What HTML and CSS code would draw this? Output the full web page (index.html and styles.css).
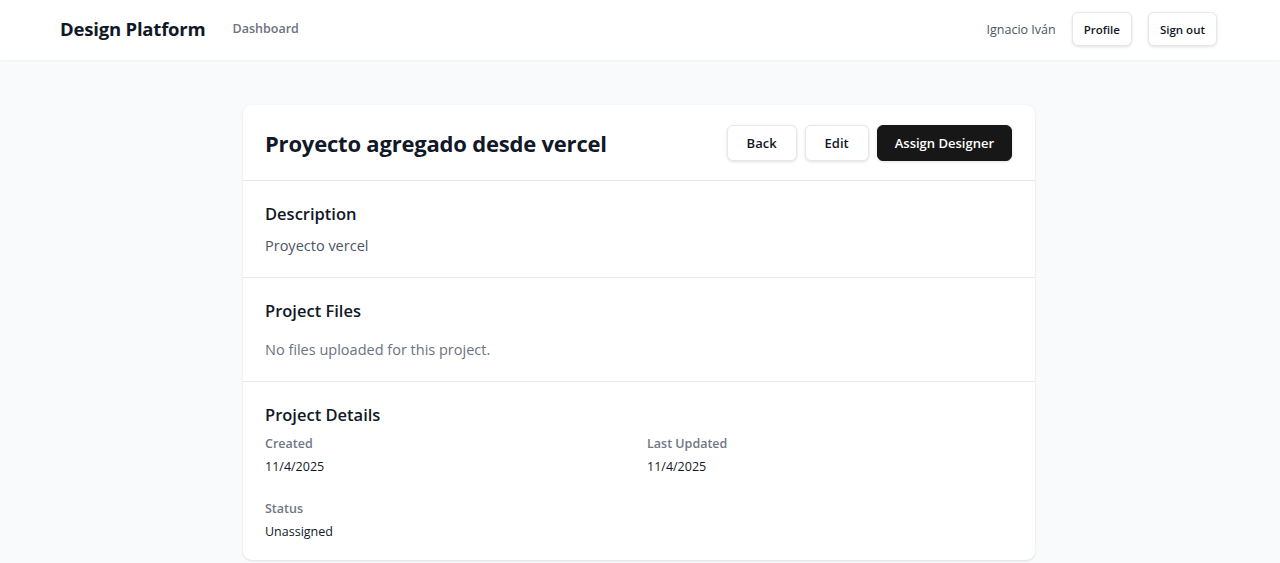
FILE: index.html
```html
<!DOCTYPE html>
<html lang="es">
<head>
<meta charset="utf-8">
<title>Design Platform</title>
<link rel="stylesheet" href="styles.css">
</head>
<body>
<header class="nav">
  <div class="nav-left">
    <span class="brand">Design Platform</span>
    <a class="nav-link" href="#">Dashboard</a>
  </div>
  <div class="nav-right">
    <span class="user">Ignacio Iván</span>
    <button class="btn btn-sm">Profile</button>
    <button class="btn btn-sm">Sign out</button>
  </div>
</header>
<main class="main">
  <section class="card">
    <div class="card-header">
      <h1 class="title">Proyecto agregado desde vercel</h1>
      <div class="actions">
        <button class="btn btn-md">Back</button>
        <button class="btn btn-md">Edit</button>
        <button class="btn btn-md btn-dark">Assign Designer</button>
      </div>
    </div>
    <div class="section">
      <h2 class="section-title">Description</h2>
      <p class="desc">Proyecto vercel</p>
    </div>
    <div class="section">
      <h2 class="section-title">Project Files</h2>
      <p class="desc files">No files uploaded for this project.</p>
    </div>
    <div class="section details">
      <h2 class="section-title">Project Details</h2>
      <dl class="grid">
        <div class="item"><dt>Created</dt><dd>11/4/2025</dd></div>
        <div class="item"><dt>Last Updated</dt><dd>11/4/2025</dd></div>
        <div class="item"><dt>Status</dt><dd>Unassigned</dd></div>
      </dl>
    </div>
  </section>
</main>
</body>
</html>
```
FILE: styles.css
```css
* { box-sizing: border-box; }
html, body { margin: 0; padding: 0; }
body {
  font-family: "Segoe UI", "Open Sans", "Noto Sans", sans-serif;
  background: #f9fafb;
  color: #111827;
  min-height: 563px;
}
.nav {
  height: 60px;
  background: #fff;
  display: flex;
  align-items: center;
  justify-content: space-between;
  padding: 0 63px 2px 60px;
  box-shadow: 0 1px 2px rgba(0,0,0,0.04);
}
.nav-left { display: flex; align-items: center; gap: 27px; padding-bottom: 2px; }
.brand { font-size: 18.5px; font-weight: 700; color: #111827; letter-spacing: -0.2px; }
.nav-link { font-size: 12.5px; font-weight: 600; color: #6b7280; text-decoration: none; }
.nav-right { display: flex; align-items: center; gap: 16px; }
.user { font-size: 12.5px; color: #4b5563; }
.btn {
  font-family: inherit;
  background: #fff;
  border: 1px solid #e5e7eb;
  border-radius: 6px;
  box-shadow: 0 1px 3px rgba(0,0,0,0.12);
  color: #111827;
  font-weight: 600;
  cursor: pointer;
}
.btn-sm { height: 34px; padding: 0 11px; font-size: 11.5px; }
.btn-md { height: 36px; padding: 0 19px; font-size: 13px; }
.btn-dark { background: #171717; color: #fff; border-color: #171717; padding: 0 17px; }
.main { padding: 45px 2px 0 0; display: flex; justify-content: center; }
.card {
  width: 792px;
  background: #fff;
  border-radius: 9px;
  box-shadow: 0 1px 3px rgba(0,0,0,0.08), 0 1px 2px rgba(0,0,0,0.04);
}
.card-header {
  display: flex;
  align-items: center;
  justify-content: space-between;
  padding: 20px 23px 19px 22px;
  border-bottom: 1px solid #e5e7eb;
}
.title { margin: 0; font-size: 22px; font-weight: 700; color: #111827; letter-spacing: -0.2px; }
.actions { display: flex; gap: 8px; }
.section { padding: 19px 22px 19px; border-bottom: 1px solid #e5e7eb; }
.section:last-child { border-bottom: 0; padding-bottom: 18px; }
.section-title { margin: 0; font-size: 16.5px; font-weight: 600; line-height: 28px; color: #111827; }
.desc { margin: 6px 0 0; font-size: 14.5px; line-height: 24px; color: #4b5563; }
.desc.files { margin-top: 13px; color: #6b7280; }
.grid { margin: 5px 0 0; display: grid; grid-template-columns: 1fr 1fr; column-gap: 16px; row-gap: 22px; }
.item dt { font-size: 12.5px; font-weight: 600; color: #707784; line-height: 20px; }
.item dd { margin: 3px 0 0; font-size: 12.5px; color: #111827; line-height: 20px; }
```
